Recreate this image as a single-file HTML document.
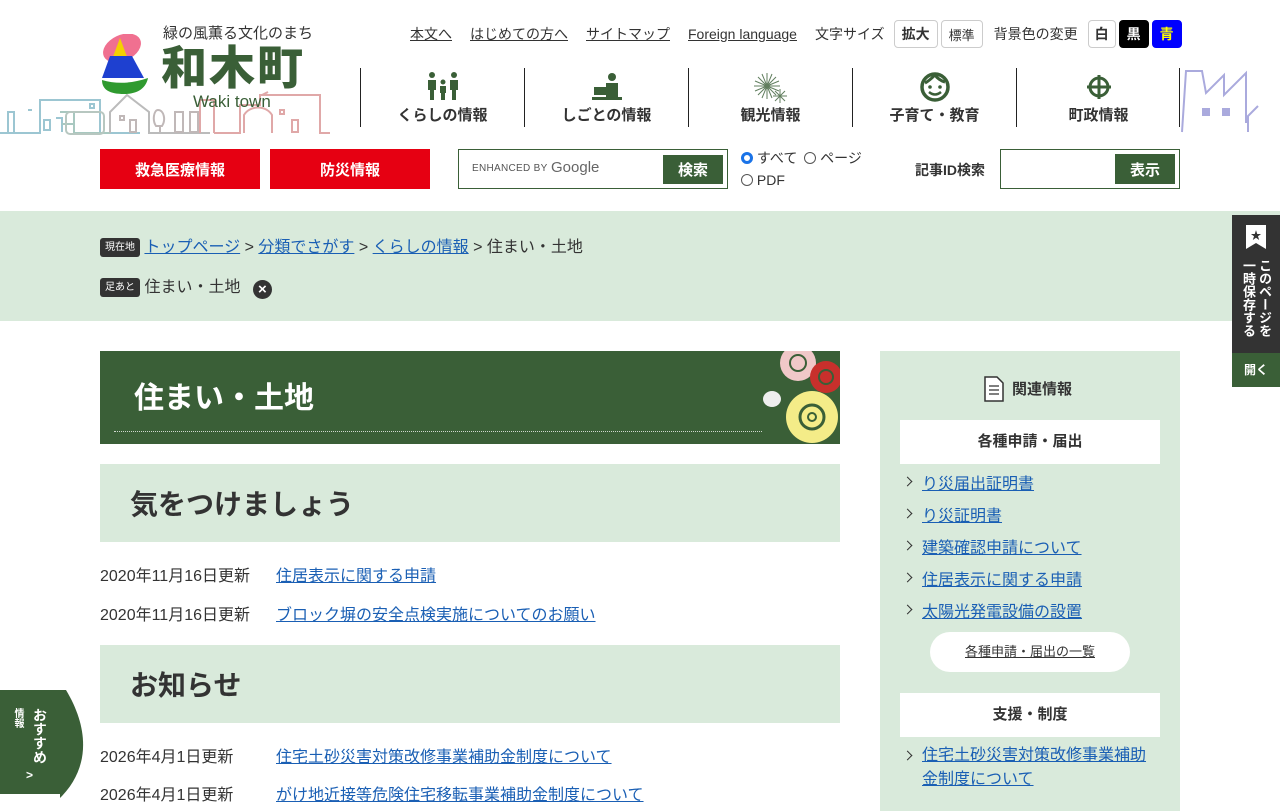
<!DOCTYPE html>
<html lang="ja"><head><meta charset="utf-8">
<style>
*{box-sizing:border-box;margin:0;padding:0}
body{width:1280px;height:800px;overflow:hidden;background:#fff;font-family:"Liberation Sans","Noto Sans CJK JP",sans-serif;color:#333;position:relative}
a{color:#1a5fb4}
.abs{position:absolute}
.util{top:20px;font-size:14px;color:#333;display:flex;align-items:center;gap:0}
.util a{color:#333;margin-right:18px}
.btn{border:1px solid #ccc;border-radius:4px;height:28px;display:inline-flex;align-items:center;justify-content:center;padding:0 7px;font-size:13px;margin-right:3px}
.nav{top:68px;height:59px;width:164px;border-left:1px solid #222;text-align:center;font-weight:bold;font-size:15px}
.nav span{position:absolute;left:0;right:0;top:36px}
.nav svg{position:absolute;left:50%;transform:translateX(-50%);top:3px}
.red{top:149px;height:40px;width:160px;background:#e60012;color:#fff;font-weight:bold;font-size:15px;display:flex;align-items:center;justify-content:center}
.gbtn{background:#3a5f37;color:#fff;font-weight:bold;font-size:15px;display:flex;align-items:center;justify-content:center}
.h2{left:100px;width:740px;height:78px;background:#d9eadb;font-size:28px;font-weight:bold;padding-left:30px;display:flex;align-items:center;color:#333}
.row{left:100px;font-size:16px}
.row a{position:absolute;left:176px;white-space:nowrap}
.row span{white-space:nowrap}
.side a{display:block;font-size:16px;margin-bottom:8px;padding-left:22px;position:relative}
.side a:before{content:"";position:absolute;left:4px;top:8px;width:6px;height:6px;border-right:1.5px solid #333;border-top:1.5px solid #333;transform:rotate(45deg)}
</style></head><body>

<svg class="abs" style="left:0;top:90px" width="330" height="45" viewBox="0 0 330 45">
<g fill="none" stroke-width="2">
<path d="M0 43H40V10H100V43H140" stroke="#9cc6d2"/><path d="M8 43V22H14V43M28 20h4M44 30v10h6V30z M56 28h6v14M90 14h4v4h-4z" stroke="#9cc6d2"/>
<path d="M60 22h14v21M74 43H110M62 34h12V43" stroke="#a8c8c0"/><rect x="66" y="22" width="38" height="22" rx="4" stroke="#b7c7c0"/>
<path d="M110 43V22L127 5l22 17V43H210" stroke="#bbb"/><path d="M120 26h4v4h-4z M130 30v12h6V30z M158 20c6 0 8 10 4 16h-6c-4-6-2-16 2-16z M160 36v6 M175 22h8v20h-8z M190 22h8v20h-8z" stroke="#c0b8b8"/>
<path d="M200 43V10h14V43 M214 43H240V15h20V5h60v38H330 M244 43V25c6-10 22-10 28 0v18M280 20h4v4h-4zM292 30h6v12h-6z M262 5l6-3" stroke="#e0a8a8"/>
</g></svg>
<svg class="abs" style="left:1180px;top:68px" width="100" height="66" viewBox="0 0 100 66">
<path d="M2 64L6 3h16l4 22 18-18v20l22-22v50" fill="none" stroke="#aaaadd" stroke-width="2"/>
<rect x="22" y="40" width="8" height="8" fill="#aaaadd"/><rect x="42" y="40" width="8" height="8" fill="#aaaadd"/>
<path d="M68 64V48l10-10" fill="none" stroke="#aaaadd" stroke-width="2"/></svg>

<svg class="abs" style="left:100px;top:34px" width="50" height="62" viewBox="0 0 50 62">
<ellipse cx="22" cy="14" rx="20" ry="13" fill="#f07090" transform="rotate(-25 22 14)"/>
<path d="M20 4L32 36H8z" fill="#f4d000"/>
<path d="M10 22h22l12 22H2z" fill="#1e40d0"/>
<path d="M2 46c14 4 28 4 46-2c-2 10-10 16-24 16S2 56 2 46z" fill="#2f9a2f"/>
</svg>
<div class="abs" style="left:163px;top:22px;font-size:15px;color:#333">緑の風薫る文化のまち</div>
<div class="abs" style="left:161px;top:40px;font-size:46px;font-weight:900;color:#3a5f37;letter-spacing:2px;line-height:56px">和木町</div>
<div class="abs" style="left:193px;top:92px;font-size:17px;color:#3a5f37">Waki town</div>

<div class="abs util" style="left:410px">
<a href="#">本文へ</a><a href="#">はじめての方へ</a><a href="#">サイトマップ</a><a href="#">Foreign language</a>
<span style="margin-right:9px">文字サイズ</span><span class="btn" style="font-weight:bold;font-size:14px">拡大</span><span class="btn">標準</span>
<span style="margin:0 10px 0 8px">背景色の変更</span>
<span class="btn" style="width:28px;font-weight:bold;font-size:14px">白</span><span class="btn" style="width:30px;background:#000;color:#fff;border-color:#000;font-weight:bold;font-size:14px">黒</span><span class="btn" style="width:30px;background:#0000ff;color:#ff0;border-color:#00f;font-weight:bold;font-size:14px">青</span>
</div>

<div class="abs nav" style="left:360px"><svg width="34" height="30" viewBox="0 0 34 30" fill="#3a5f37"><circle cx="6" cy="4" r="3"/><circle cx="28" cy="4" r="3"/><circle cx="17" cy="11" r="2.5"/><path d="M2 9h8v10H8v10H4V19H2zM24 9h8v10h-2v10h-4V19h-2zM14 15h6v7h-1v7h-4v-7h-1z"/></svg><span>くらしの情報</span></div>
<div class="abs nav" style="left:524px"><svg width="30" height="30" viewBox="0 0 30 30" fill="#3a5f37"><circle cx="20" cy="6" r="4"/><path d="M14 12h12v14H14zM2 16h14v8H2zM0 26h30v3H0z"/></svg><span>しごとの情報</span></div>
<div class="abs nav" style="left:688px"><svg width="36" height="34" viewBox="0 0 36 34" stroke="#3a5f37" stroke-width="1" fill="none"><g opacity=".8"><path d="M14 2v26M1 15h26M5 6l18 18M23 6L5 24M9 3l10 24M19 3L9 27M2 10l24 10M26 10L2 20"/><path d="M27 18v14M20 25h14M22 20l10 10M32 20l-10 10"/></g></svg><span>観光情報</span></div>
<div class="abs nav" style="left:852px"><svg width="32" height="32" viewBox="0 0 32 32"><circle cx="16" cy="16" r="13" fill="none" stroke="#3a5f37" stroke-width="3.5"/><path d="M6 12c4-2 8-6 10-8 2 3 6 6 10 7" fill="none" stroke="#3a5f37" stroke-width="3"/><circle cx="11" cy="16" r="1.8" fill="#3a5f37"/><circle cx="21" cy="16" r="1.8" fill="#3a5f37"/><path d="M10 21q6 5 12 0" stroke="#3a5f37" stroke-width="2.5" fill="none"/></svg><span>子育て・教育</span></div>
<div class="abs nav" style="left:1016px"><svg width="28" height="30" viewBox="0 0 28 30"><circle cx="14" cy="16" r="9" fill="none" stroke="#3a5f37" stroke-width="3"/><path d="M14 4v24M2 16h24" stroke="#3a5f37" stroke-width="3"/></svg><span>町政情報</span></div>
<div class="abs" style="left:1179px;top:68px;height:59px;border-left:1px solid #222"></div>

<div class="abs red" style="left:100px">救急医療情報</div>
<div class="abs red" style="left:270px">防災情報</div>
<div class="abs" style="left:458px;top:149px;width:270px;height:40px;border:1px solid #3a5f37"><span class="abs" style="left:13px;top:13px;font-size:10px;color:#555;letter-spacing:.3px">ENHANCED BY</span><span class="abs" style="left:92px;top:9px;font-size:15px;color:#666">Google</span><div class="abs gbtn" style="left:204px;top:5px;width:60px;height:29px">検索</div></div>
<div class="abs" style="left:741px;top:147px;font-size:14px;line-height:22px"><span style="display:inline-block;width:12px;height:12px;border-radius:50%;border:3px solid #1a73e8;vertical-align:-1px"></span> すべて <span style="display:inline-block;width:12px;height:12px;border-radius:50%;border:1px solid #555;vertical-align:-1px;margin-left:3px"></span> ページ<br><span style="display:inline-block;width:12px;height:12px;border-radius:50%;border:1px solid #555;vertical-align:-1px"></span> PDF</div>
<div class="abs" style="left:915px;top:160px;font-size:14px;font-weight:bold">記事ID検索</div>
<div class="abs" style="left:1000px;top:149px;width:180px;height:40px;border:1px solid #3a5f37"><div class="abs gbtn" style="left:114px;top:4px;width:60px;height:30px">表示</div></div>

<div class="abs" style="left:0;top:211px;width:1280px;height:110px;background:#d9eadb"></div>
<div class="abs" style="left:100px;top:233px;font-size:16px;white-space:nowrap"><span style="background:#333;color:#fff;font-size:10px;padding:4px 5px;border-radius:3px;vertical-align:2px">現在地</span> <a href="#">トップページ</a> &gt; <a href="#">分類でさがす</a> &gt; <a href="#">くらしの情報</a> &gt; 住まい・土地</div>
<div class="abs" style="left:100px;top:273px;font-size:16px;white-space:nowrap"><span style="background:#333;color:#fff;font-size:10px;padding:4px 5px;border-radius:3px;vertical-align:2px">足あと</span> 住まい・土地 <span style="display:inline-block;width:19px;height:19px;border-radius:50%;background:#333;color:#fff;font-size:15px;line-height:19px;text-align:center;font-weight:bold;margin-left:8px;vertical-align:-2px">×</span></div>

<div class="abs" style="left:1232px;top:215px;width:48px;height:138px;background:#333"><svg class="abs" style="left:14px;top:10px" width="20" height="24" viewBox="0 0 20 24"><path d="M0 0h20v24l-10-6-10 6z" fill="#fff"/><text x="10" y="14" font-size="11" text-anchor="middle" fill="#333">★</text></svg><div class="abs" style="left:8px;top:44px;writing-mode:vertical-rl;color:#fff;font-size:13px;font-weight:bold;line-height:16px">このページを<br>一時保存する</div></div>
<div class="abs" style="left:1232px;top:353px;width:48px;height:34px;background:#3a5f37;color:#fff;font-size:12px;font-weight:bold;text-align:center;line-height:34px">開く</div>

<div class="abs" style="left:100px;top:351px;width:740px;height:93px;background:#3a5f37;overflow:hidden">
<div class="abs" style="left:34px;top:22px;color:#fff;font-size:30px;font-weight:bold">住まい・土地</div>
<div class="abs" style="left:14px;top:80px;width:648px;border-top:1px dotted #cfd8cf"></div>
<svg class="abs" style="left:658px;top:0" width="82" height="93" viewBox="0 0 82 93"><circle cx="40" cy="12" r="18" fill="#f0c8c8"/><circle cx="40" cy="12" r="8" fill="none" stroke="#3a5f37" stroke-width="2"/><circle cx="68" cy="26" r="16" fill="#c8302c"/><circle cx="68" cy="26" r="7" fill="none" stroke="#3a5f37" stroke-width="2"/><circle cx="54" cy="66" r="26" fill="#f4ec88"/><circle cx="54" cy="66" r="12" fill="none" stroke="#3a5f37" stroke-width="3"/><circle cx="54" cy="66" r="4" fill="none" stroke="#3a5f37" stroke-width="2"/><ellipse cx="14" cy="48" rx="9" ry="8" fill="#eee"/></svg>
</div>

<div class="abs h2" style="top:464px">気をつけましょう</div>
<div class="abs row" style="top:562px"><span>2020年11月16日更新</span><a href="#">住居表示に関する申請</a></div>
<div class="abs row" style="top:601px"><span>2020年11月16日更新</span><a href="#">ブロック塀の安全点検実施についてのお願い</a></div>
<div class="abs h2" style="top:645px">お知らせ</div>
<div class="abs row" style="top:743px"><span>2026年4月1日更新</span><a href="#">住宅土砂災害対策改修事業補助金制度について</a></div>
<div class="abs row" style="top:781px"><span>2026年4月1日更新</span><a href="#">がけ地近接等危険住宅移転事業補助金制度について</a></div>

<div class="abs" style="left:880px;top:351px;width:300px;height:460px;background:#d9eadb">
<svg class="abs" style="left:104px;top:25px" width="20" height="26" viewBox="0 0 20 26"><path d="M1 1h12l6 6v18H1z" fill="#fff" stroke="#333" stroke-width="1.5"/><path d="M5 10h10M5 14h10M5 18h10" stroke="#333" stroke-width="1.3"/></svg>
<div class="abs" style="left:132px;top:27px;font-size:15px;font-weight:bold">関連情報</div>
<div class="abs" style="left:20px;top:69px;width:260px;height:44px;background:#fff;text-align:center;line-height:44px;font-weight:bold;font-size:15px">各種申請・届出</div>
<div class="abs side" style="left:20px;top:119px;width:260px"><a href="#">り災届出証明書</a><a href="#">り災証明書</a><a href="#">建築確認申請について</a><a href="#">住居表示に関する申請</a><a href="#">太陽光発電設備の設置</a></div>
<div class="abs" style="left:50px;top:281px;width:200px;height:40px;background:#fff;border-radius:20px;text-align:center;line-height:40px;font-size:13px"><a href="#" style="color:#333">各種申請・届出の一覧</a></div>
<div class="abs" style="left:20px;top:342px;width:260px;height:44px;background:#fff;text-align:center;line-height:44px;font-weight:bold;font-size:15px">支援・制度</div>
<div class="abs side" style="left:20px;top:393px;width:260px;line-height:24px"><a href="#" style="line-height:24px">住宅土砂災害対策改修事業補助金制度について</a></div>
</div>

<svg class="abs" style="left:0;top:690px" width="84" height="110" viewBox="0 0 84 110"><path d="M0 0h66c24 40 24 80 -8 110H0z" fill="#3a5f37"/></svg>
<div class="abs" style="left:0;top:794px;width:60px;height:6px;background:#fff"></div>
<div class="abs" style="left:30px;top:708px;writing-mode:vertical-rl;color:#fff;font-size:14px;font-weight:bold;line-height:20px">おすすめ</div>
<div class="abs" style="left:10px;top:708px;writing-mode:vertical-rl;color:#fff;font-size:10px;font-weight:bold">情報</div>
<div class="abs" style="left:26px;top:768px;color:#fff;font-size:12px;font-weight:bold">&gt;</div>
</body></html>
